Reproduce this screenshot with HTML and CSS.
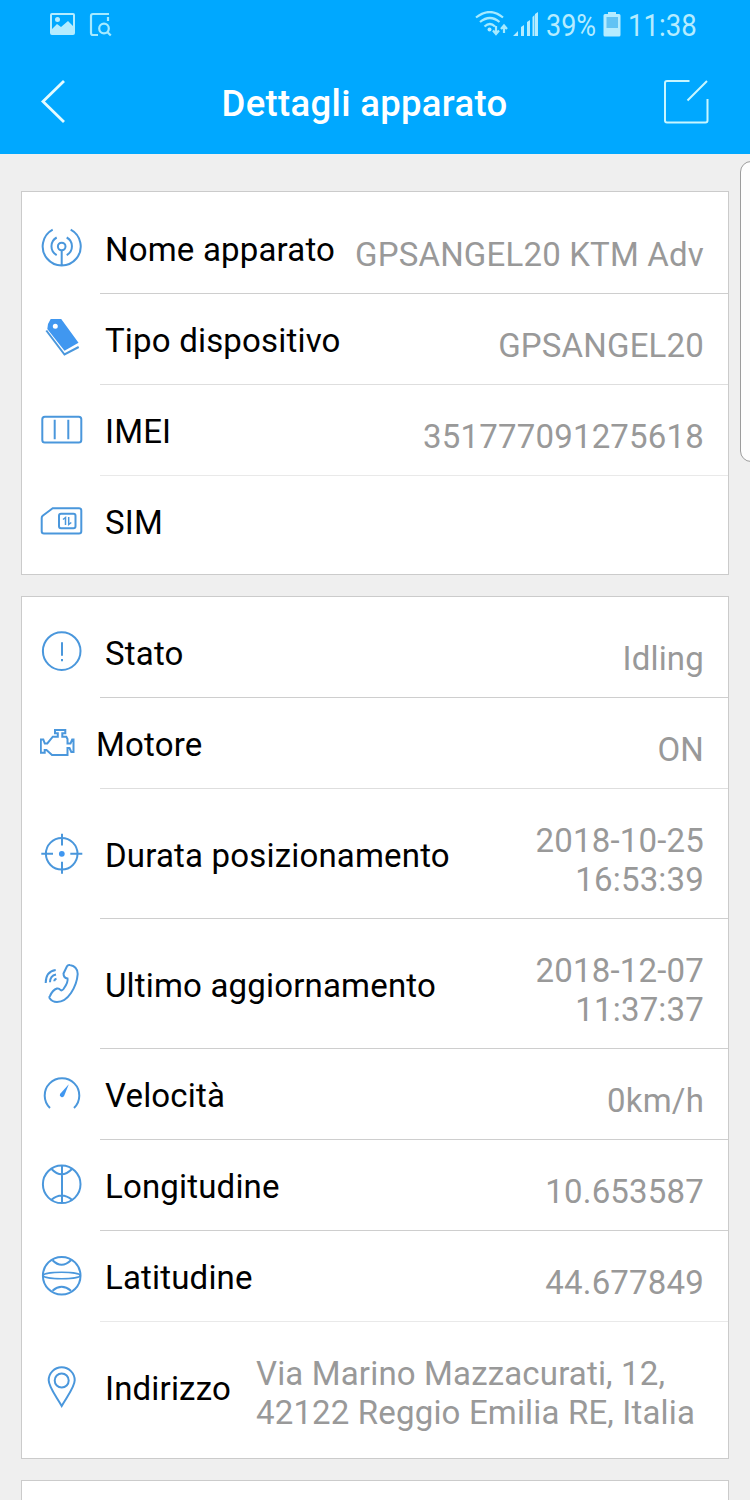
FILE: index.html
```
<!DOCTYPE html>
<html lang="it">
<head>
<meta charset="utf-8">
<title>Dettagli apparato</title>
<link rel="stylesheet" href="styles.css">
</head>
<body>
<div class="screen">
  <header class="header">
    <div class="status">
      <svg class="status-left" width="64" height="28" viewBox="0 0 64 28">
        <path class="solid" fill-rule="evenodd" d="M2 2h21q2 0 2 2v18q0 2-2 2H2q-2 0-2-2V4q0-2 2-2zm0 2v14l5-5 4 3 7-6 5 5V4zM7.500 6a2.500 2.500 0 1 1 0 5a2.500 2.500 0 1 1 0-5z"/>
        <path class="line" d="M59 3H43q-2 0-2 2v17q0 2 2 2h5M58 6v4"/>
        <circle class="line" cx="54" cy="17.500" r="4.800"/><path class="line" d="M57.300 21l3.500 3.500"/>
      </svg>
      <div class="status-right">
        <svg width="64" height="28" viewBox="0 0 64 28">
          <path class="line" d="M1 6.500Q15-4.500 28 6.500M5 11Q15 3 24.500 11M9.500 15.500Q15 10.500 20 15.500"/>
          <circle class="solid" cx="14.500" cy="18.500" r="2"/>
          <path class="line" d="M21 15v8m-3-3.500l3 3.500 3-3.500M29 22v-7.500m-3 3.500l3-3.500 3 3.500"/>
          <path class="solid" d="M38 25l5-5v5zM46 16l3-2v11H46zM52 11l3-2v16H52zM57.500 6l2-2v21h-2zM60 3l3-2v24h-3z"/>
        </svg>
        <span class="battery-text">39%</span>
        <svg width="18" height="28" viewBox="0 0 18 28"><path class="solid" d="M5 1h8v2h3q1.500 0 1.500 1.500V24q0 1.500-1.500 1.500H2Q.5 25.500.5 24V4.500Q.5 3 2 3h3z"/><path class="battery-gap" d="M3.500 6h11.500v11H3.500z"/></svg>
        <span class="clock">11:38</span>
      </div>
    </div>
    <div class="toolbar">
      <svg width="26" height="46" viewBox="0 0 26 46"><path class="nav-line" d="M24 2L3 22.500l21 20.500"/></svg>
      <h1 class="title">Dettagli apparato</h1>
      <svg width="46" height="46" viewBox="0 0 46 46"><path class="edit-line" d="M26.500 2H4Q2 2 2 4v37.500q0 2 2 2h38.500q2 0 2-2V20M44 2L24.500 21.500"/></svg>
    </div>
  </header>

  <main class="content">
    <section class="card device">
      <div class="row">
        <svg class="icon" viewBox="0 0 44 44"><path d="M12.700 3.700a19 19 0 1 0 18 0M16.700 11.500a10 10 0 0 0 0 17.600M26.700 11.500a10 10 0 0 1 0 17.600M21.700 24.300V39"/><circle cx="21.700" cy="20.500" r="3.800"/></svg>
        <span class="label">Nome apparato</span><span class="value">GPSANGEL20 KTM Adv</span>
      </div>
      <div class="row soft">
        <svg class="icon" viewBox="0 0 44 44"><path class="fill" fill-rule="evenodd" d="M10.700 2h10.500l17.300 23.700L24.500 33.700 7.300 12 8 7zM15.300 6.800a2.500 2.500 0 1 0 0 5a2.500 2.500 0 1 0 0-5z"/><path d="M6.300 13.500l18.200 24L38.700 30"/></svg>
        <span class="label">Tipo dispositivo</span><span class="value">GPSANGEL20</span>
      </div>
      <div class="row faint">
        <svg class="icon" viewBox="0 0 44 44"><rect x="2.300" y="8.700" width="39" height="25.800" rx="2.500"/><path d="M14.700 11.700v19.600M28.300 11.700v19.600"/></svg>
        <span class="label">IMEI</span><span class="value">351777091275618</span>
      </div>
      <div class="row last">
        <svg class="icon" viewBox="0 0 44 44"><path d="M12.700 9.300H39q2.300 0 2.300 2.300v20.700q0 2.300-2.300 2.300H4q-2.300 0-2.300-2.300V19q0-1.300 1-2.200z"/><rect x="19" y="14.700" width="16.500" height="14.500" rx="2"/><path class="detail" d="M23 20.500l2.500-2v7.500M28.700 18v7.500l2.600-2"/></svg>
        <span class="label">SIM</span><span class="value"></span>
      </div>
    </section>

    <section class="card position">
      <div class="row">
        <svg class="icon" viewBox="0 0 44 44"><circle cx="21.700" cy="21.100" r="18.800"/><path d="M22 12.300v13.400M22 29v2.200"/></svg>
        <span class="label">Stato</span><span class="value">Idling</span>
      </div>
      <div class="row compact soft">
        <svg class="icon" viewBox="0 0 44 44"><path d="M15 9h10.300v3.300h-3v3.400h4L27.500 18v4.500h3l1.700-4h1.300V31h-2.200l-1.800-4h-2v7H12l-5.500-5H4.700v2.700H.8V18.500h2.500l1.500 4h2.500l5.500-6.800h5v-3.400H15z"/></svg>
        <span class="label">Motore</span><span class="value">ON</span>
      </div>
      <div class="row tall">
        <svg class="icon" viewBox="0 0 44 44"><circle cx="21.700" cy="21.800" r="15.800"/><path d="M22 1.800v11.700M22 29.800v12M1.300 21.800H13M30.300 21.800h12"/><circle class="fill" cx="21.800" cy="21.800" r="2.900"/></svg>
        <span class="label">Durata posizionamento</span><span class="value">2018-10-25<br>16:53:39</span>
      </div>
      <div class="row tall">
        <svg class="icon" viewBox="0 0 44 44"><path d="M23.500 11.500L27 4.200Q28 2.500 30 3q7.700 1.500 7.700 9Q37 22 31 31 25 40 17 40q-5 0-7.500-4-.5-1 .5-2 2.500-6 7-7.500 2-.5 3.500 1.500 1.500 1 3-1 5-7 4-10.500-4-.5-4-5zM5.700 21q0-11.500 10-13M10 20.300q0-6.500 6-7.800M14.300 19.300q0-2 2.200-2.500"/></svg>
        <span class="label">Ultimo aggiornamento</span><span class="value">2018-12-07<br>11:37:37</span>
      </div>
      <div class="row">
        <svg class="icon" viewBox="0 0 44 44"><path d="M10 36a17.300 17.300 0 1 1 24 0"/><path class="fill" d="M28.800 12.300L20 21.900a2.200 2.200 0 1 0 4.200 1.800z"/></svg>
        <span class="label">Velocità</span><span class="value">0km/h</span>
      </div>
      <div class="row">
        <svg class="icon" viewBox="0 0 44 44"><circle cx="21.700" cy="21.300" r="18.800"/><path d="M22 2.500v37.600M11.500 6q10 10.500 20.500 0M11.500 36.700q10-8.500 20.500 0"/></svg>
        <span class="label">Longitudine</span><span class="value">10.653587</span>
      </div>
      <div class="row faint">
        <svg class="icon" viewBox="0 0 44 44"><circle cx="21.700" cy="21.700" r="18.800"/><ellipse class="detail" cx="21.700" cy="21.500" rx="18.500" ry="3.200"/><path d="M12.500 6.300q9 9 18.500 0M12.500 36.700q9-7.800 18.500 0"/></svg>
        <span class="label">Latitudine</span><span class="value">44.677849</span>
      </div>
      <div class="row tall last">
        <svg class="icon" viewBox="0 0 44 44"><path d="M21.700 41C16 31 8.700 22 8.700 15.300a13 13 0 0 1 26 0C34.700 22 27.400 31 21.700 41z"/><circle cx="21.700" cy="15.500" r="7"/></svg>
        <span class="label">Indirizzo</span><span class="value address">Via Marino Mazzacurati, 12,<br>42122 Reggio Emilia RE, Italia</span>
      </div>
    </section>

    <section class="card next"></section>
  </main>
  <div class="edge-handle"></div>
</div>
</body>
</html>
```
FILE: styles.css
```
* { box-sizing: border-box; }
body { margin: 0; background: #efefef; font-family: Roboto, "Liberation Sans", sans-serif; }
.screen { position: relative; width: 750px; height: 1500px; overflow: hidden; background: #efefef; }

.header { height: 154px; background: #00a8ff; }
.status { display: flex; justify-content: space-between; height: 50px; padding: 11px 52px 0 50px; color: #b5ecff; }
.status-right { display: flex; height: 28px; margin-right: 0; }
.status svg { display: block; flex: none; }
.status-right span { font-size: 31px; line-height: 29px; white-space: nowrap; transform-origin: left center; }
.battery-text { width: 50px; margin-left: 7px; margin-right: 7px; transform: scaleX(.87); }
.clock { width: 70px; margin-left: 7px; transform: scaleX(.89); }
.solid { fill: #b5ecff; }
.battery-gap { fill: #62c3f4; }
.line { fill: none; stroke: #a5eaff; stroke-width: 2.2; }
.toolbar { display: flex; align-items: center; justify-content: space-between; height: 104px; padding: 0 41px 0 40px; }
.title { margin: 0; padding-top: 3px; font-size: 36.5px; line-height: 44px; font-weight: 500; color: #fff; letter-spacing: 0.32px; }
.nav-line { fill: none; stroke: #e4fbff; stroke-width: 2.800; }
.edit-line { fill: none; stroke: #c8f6ff; stroke-width: 2; }

.content { display: flex; flex-direction: column; gap: 21px; padding: 37px 21px 0; }
.card { flex: none; background: #fff; border: 1px solid #cbcbcb; }
.device { padding: 11px 0 7px; }
.position { padding: 10px 0 6px; }
.next { height: 60px; }
.row { position: relative; display: flex; align-items: center; height: 91px; padding: 0 24px 1px 18px; }
.row::after { content: ""; position: absolute; left: 78px; right: 0; bottom: 0; height: 1px; background: #cecece; }
.row.soft::after { background: #dedede; }
.row.faint::after { background: #e9e9e9; }
.row.last::after { display: none; }
.tall { height: 130px; }
.icon { flex: none; width: 44px; height: 44px; fill: none; stroke: #4a97dc; stroke-width: 2; }
.icon .fill { fill: #4097f0; stroke: none; }
.icon .detail { stroke-width: 1.500; }
.label { margin-left: 21px; padding-top: 2px; font-size: 33px; line-height: 39px; color: #000; white-space: nowrap; letter-spacing: 0.18px; }
.tall .label { padding-top: 3px; }
.compact .label { margin-left: 12px; }
.value { margin-left: auto; padding-top: 13px; font-size: 33px; line-height: 39px; color: #999; text-align: right; white-space: nowrap; letter-spacing: 0.18px; }
.tall .value { padding-top: 12px; }
.value.address { margin-left: 25px; text-align: left; letter-spacing: 0.16px; }
.edge-handle { position: absolute; left: 740px; top: 161px; width: 30px; height: 301px; background: #fdfdfd; border: 1px solid #9c9c9c; border-radius: 11px; }
```
